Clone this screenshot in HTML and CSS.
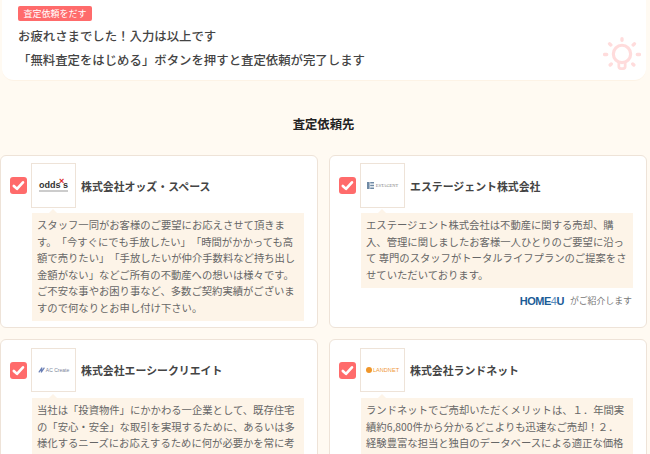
FILE: index.html
```html
<!DOCTYPE html>
<html lang="ja">
<head>
<meta charset="utf-8">
<title>査定依頼</title>
<link rel="stylesheet" href="styles.css">
</head>
<body>
<section class="notice">
  <span class="tag">査定依頼をだす</span>
  <p class="notice-line first">お疲れさまでした！入力は以上です</p>
  <p class="notice-line">「無料査定をはじめる」ボタンを押すと査定依頼が完了します</p>
  <svg class="bulb" viewBox="0 0 36 36" fill="none" stroke="#ffdcdc" stroke-linecap="round">
    <circle cx="18" cy="17" r="8.2" stroke-width="3"/>
    <path d="M15 25v4a2 2 0 0 0 2 2h2a2 2 0 0 0 2-2v-4" stroke-width="2.6"/>
    <path d="M18 2.5v1.5M6.2 7.4l1.2 1.1M29.8 7.4l-1.2 1.1M1.5 17.5h2M32.5 17.5h2M6.8 27.5l1-1M29.2 27.5l-1-1" stroke-width="3.2"/>
  </svg>
</section>

<h2 class="heading">査定依頼先</h2>

<div class="grid">
  <article class="card">
    <div class="head">
      <span class="check"><svg viewBox="0 0 16 16"><path d="M3.6 8.4l3 2.8 5.6-6.2" fill="none" stroke="#fff" stroke-width="2.5" stroke-linecap="round" stroke-linejoin="round"/></svg></span>
      <div class="logo"><span class="odds">odds<i>×</i>s</span></div>
      <h3 class="name">株式会社オッズ・スペース</h3>
    </div>
    <p class="desc">スタッフ一同がお客様のご要望にお応えさせて頂きます。「今すぐにでも手放したい」「時間がかかっても高額で売りたい」「手放したいが仲介手数料など持ち出し金額がない」などご所有の不動産への想いは様々です。ご不安な事やお困り事など、多数ご契約実績がございますので何なりとお申し付け下さい。</p>
  </article>

  <article class="card">
    <div class="head">
      <span class="check"><svg viewBox="0 0 16 16"><path d="M3.6 8.4l3 2.8 5.6-6.2" fill="none" stroke="#fff" stroke-width="2.5" stroke-linecap="round" stroke-linejoin="round"/></svg></span>
      <div class="logo"><span class="esta"><svg viewBox="0 0 7 7"><path d="M0 0h2.6v7H0zM3.2 0H7v1.4H3.2zM3.2 2.8H7v1.4H3.2zM3.2 5.6H7V7H3.2z" fill="#6f8aa5"/></svg>ESTAGENT</span></div>
      <h3 class="name">エステージェント株式会社</h3>
    </div>
    <p class="desc">エステージェント株式会社は不動産に関する売却、購入、管理に関しましたお客様一人ひとりのご要望に沿って 専門のスタッフがトータルライフプランのご提案をさせていただいております。</p>
    <p class="intro"><span class="home">HOME<em>4</em>U</span>がご紹介します</p>
  </article>

  <article class="card lower">
    <div class="head">
      <span class="check"><svg viewBox="0 0 16 16"><path d="M3.6 8.4l3 2.8 5.6-6.2" fill="none" stroke="#fff" stroke-width="2.5" stroke-linecap="round" stroke-linejoin="round"/></svg></span>
      <div class="logo"><span class="ac"><svg viewBox="0 0 10 10"><path d="M1 8L5 2 4 8l4-6" fill="none" stroke="#6a7fb5" stroke-width="1.4"/></svg>AC Create</span></div>
      <h3 class="name">株式会社エーシークリエイト</h3>
    </div>
    <p class="desc">当社は「投資物件」にかかわる一企業として、既存住宅の「安心・安全」な取引を実現するために、あるいは多様化するニーズにお応えするために何が必要かを常に考</p>
  </article>

  <article class="card lower">
    <div class="head">
      <span class="check"><svg viewBox="0 0 16 16"><path d="M3.6 8.4l3 2.8 5.6-6.2" fill="none" stroke="#fff" stroke-width="2.5" stroke-linecap="round" stroke-linejoin="round"/></svg></span>
      <div class="logo"><span class="land"><b></b>LANDNET</span></div>
      <h3 class="name">株式会社ランドネット</h3>
    </div>
    <p class="desc">ランドネットでご売却いただくメリットは、１．年間実績約6,800件から分かるどこよりも迅速なご売却！２．<br>経験豊富な担当と独自のデータベースによる適正な価格</p>
  </article>
</div>
</body>
</html>
```

FILE: styles.css
```css
* { box-sizing: border-box; }

html, body { height: 454px; overflow: hidden; }

body {
  margin: 0;
  background: #fffaf2;
  color: #444;
  font-family: "Noto Sans CJK JP", "Noto Sans", sans-serif;
  text-spacing-trim: space-all;
}

.notice {
  position: relative;
  height: 81px;
  margin: 0 4px 0 2px;
  padding: 6px 16px 0;
  background: #fff;
  border-bottom: 1px solid #fdf3e6;
  border-radius: 0 0 12px 12px;
}

.tag {
  display: block;
  width: 74px;
  height: 15px;
  background: #ff6b6b;
  border-radius: 2px;
  color: #fff;
  font-size: 9px;
  line-height: 15px;
  text-align: center;
}

.notice-line {
  margin: 6px 0 0;
  font-size: 12.4px;
  font-weight: 500;
  line-height: 19px;
}

.notice-line.first { margin-top: 6px; }

.notice-line.first + .notice-line { margin-top: 5px; }

.bulb {
  position: absolute;
  right: 5px;
  top: 36px;
  width: 38px;
  height: 38px;
}

.heading {
  margin: 33px 0 0;
  padding-right: 3px;
  color: #222;
  font-size: 12.3px;
  font-weight: 700;
  line-height: 20px;
  text-align: center;
}

.grid {
  display: grid;
  grid-template-columns: 318px 318px;
  column-gap: 11px;
  row-gap: 11px;
  margin: 21px 0 0;
  align-items: stretch;
}

.card {
  height: 173px;
  padding: 7px 13px 0 9px;
  background: #fff;
  border: 1px solid #eee3d8;
  border-radius: 6px;
}

.card.lower { height: 130px; padding-top: 8px; }

.head {
  display: flex;
  align-items: center;
}

.check {
  display: flex;
  flex: none;
  width: 17px;
  height: 17px;
  margin-right: 4px;
  background: #ff6b6b;
  border-radius: 3px;
}

.check svg { width: 100%; height: 100%; }

.logo {
  display: flex;
  flex: none;
  align-items: center;
  justify-content: center;
  width: 45px;
  height: 45px;
  margin-right: 5px;
  background: #fff;
  border: 1px solid #eee3d8;
}

.lower .logo { height: 44px; }

.name {
  margin: 0;
  color: #444;
  font-size: 10.9px;
  font-weight: 700;
  line-height: 16px;
}

.desc {
  position: relative;
  margin: 5px 0 0 22px;
  padding: 4px 5px 5px;
  background: #fdf4e8;
  color: #666;
  font-size: 10.33px;
  line-height: 16.5px;
}

.lower .desc { margin-top: 6px; }

.desc::before {
  content: "";
  position: absolute;
  left: 17px;
  top: -4px;
  border-left: 4px solid transparent;
  border-right: 4px solid transparent;
  border-bottom: 4px solid #fdf4e8;
}

.intro {
  display: flex;
  justify-content: flex-end;
  align-items: center;
  margin: 5px 1px 0 0;
  color: #777;
  font-size: 8.9px;
  line-height: 16px;
}

.home {
  margin-right: 6px;
  color: #1c5c97;
  font-family: "Liberation Sans", sans-serif;
  font-size: 11px;
  font-weight: 700;
  letter-spacing: -0.5px;
}

.home em { color: #5c8fc0; font-style: normal; font-weight: 400; }

.odds {
  color: #333;
  font-family: "Liberation Sans", sans-serif;
  font-size: 9px;
  font-weight: 700;
  line-height: 10px;
  border-bottom: 2px solid #ccc;
}

.odds i {
  margin: 0 -1.5px;
  color: #d22;
  font-size: 9px;
  font-style: normal;
  line-height: 0;
  vertical-align: 4px;
}

.esta {
  display: flex;
  align-items: center;
  gap: 2px;
  color: #7c7c7c;
  font-family: "Liberation Serif", serif;
  font-size: 4.4px;
}

.esta svg { width: 7px; height: 7px; }

.ac {
  display: flex;
  align-items: center;
  color: #7a8398;
  font-family: "Liberation Sans", sans-serif;
  font-size: 5px;
}

.ac svg { width: 8px; height: 8px; }

.land {
  display: flex;
  align-items: center;
  gap: 1px;
  color: #ef9a3c;
  font-family: "Liberation Sans", sans-serif;
  font-size: 5.6px;
}

.land b { width: 6px; height: 6px; border-radius: 50%; background: #f0962a; }
```
